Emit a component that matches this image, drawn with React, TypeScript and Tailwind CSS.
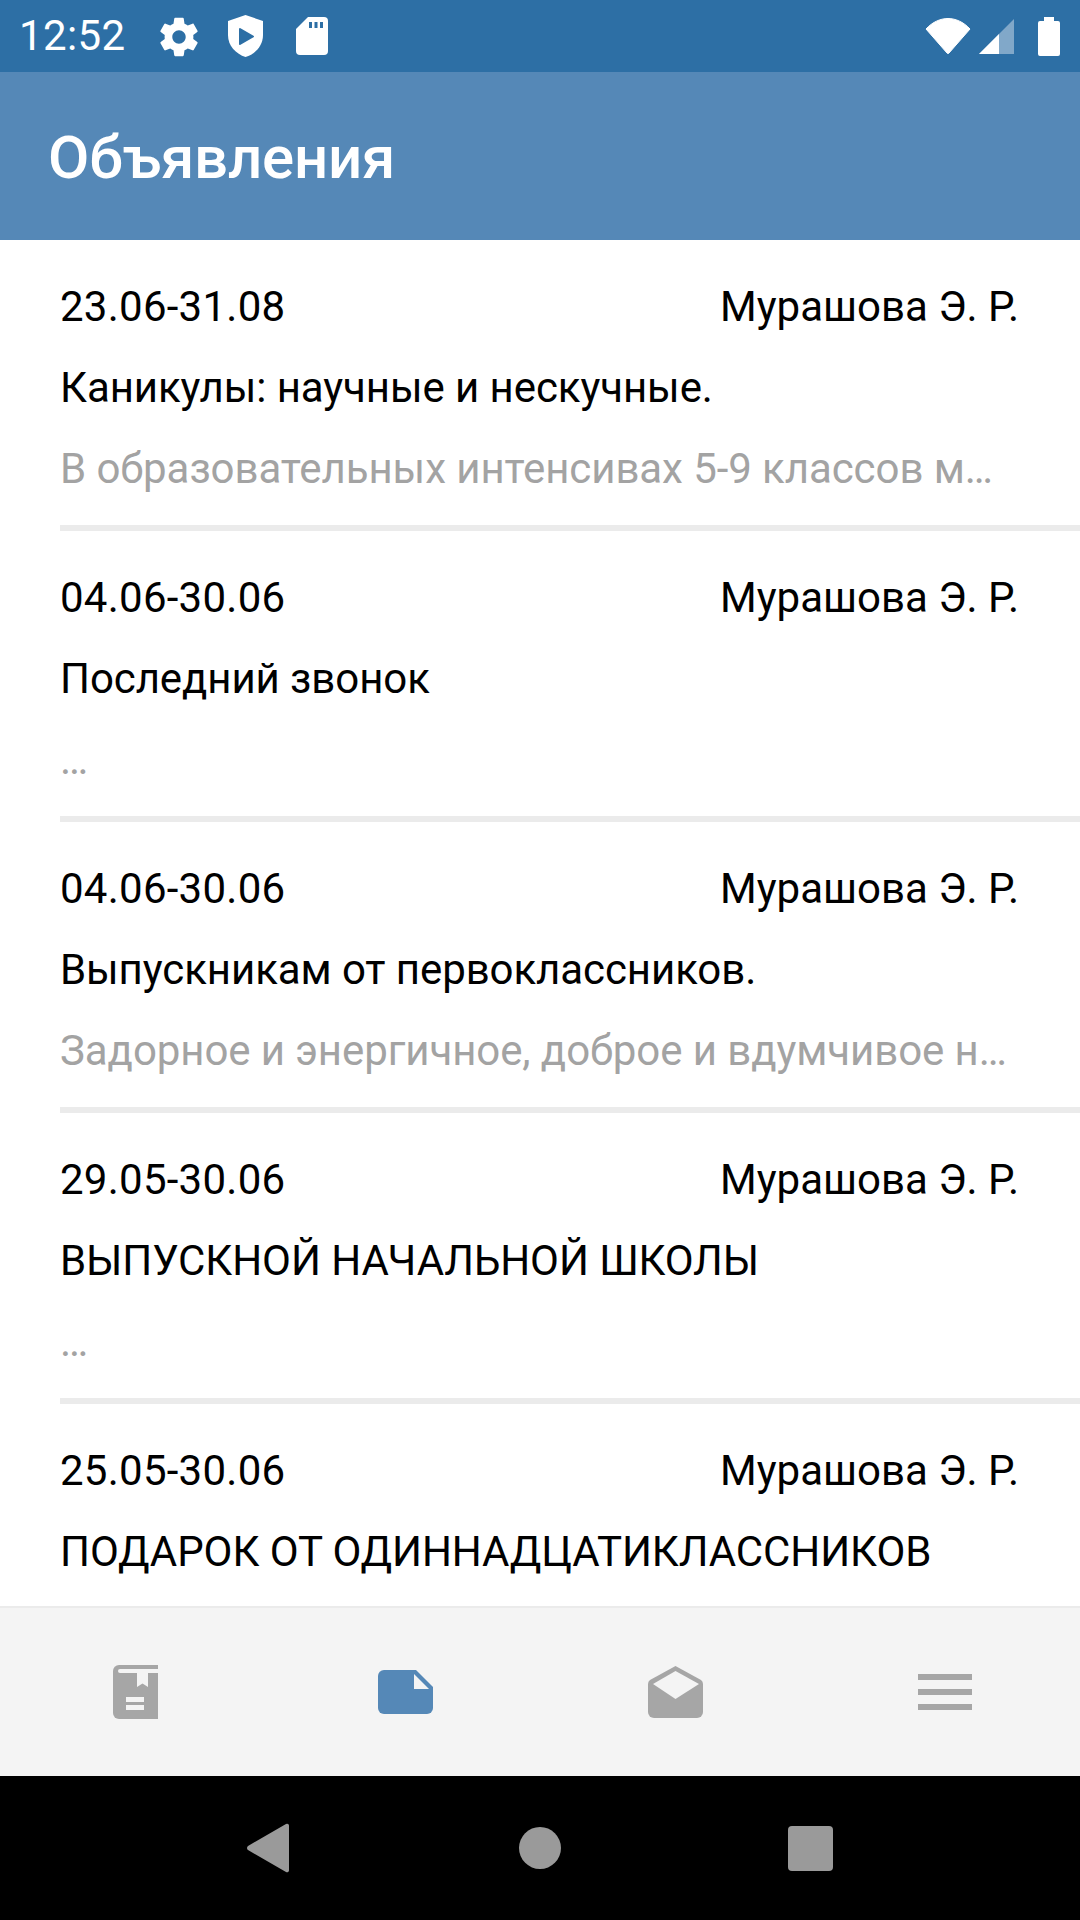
const notices = [
  { dates: "23.06-31.08", author: "Мурашова Э. Р.", title: "Каникулы: научные и нескучные.", text: "В образовательных интенсивах 5-9 классов м…" },
  { dates: "04.06-30.06", author: "Мурашова Э. Р.", title: "Последний звонок", text: "…" },
  { dates: "04.06-30.06", author: "Мурашова Э. Р.", title: "Выпускникам от первоклассников.", text: "Задорное и энергичное, доброе и вдумчивое н…" },
  { dates: "29.05-30.06", author: "Мурашова Э. Р.", title: "ВЫПУСКНОЙ НАЧАЛЬНОЙ ШКОЛЫ", text: "…" },
  { dates: "25.05-30.06", author: "Мурашова Э. Р.", title: "ПОДАРОК ОТ ОДИННАДЦАТИКЛАССНИКОВ", text: "" },
];

function StatusBar() {
  return (
    <div className="h-[72px] shrink-0 bg-[#2d6fa5] flex items-center pl-[19px] pr-5 text-white">
      <span className="text-[42px] leading-none tracking-[0.4px]">12:52</span>
      <svg className="ml-[30px] mt-[1px]" width="46" height="46" viewBox="0 0 24 24" fill="#fff">
        <path d="M19.43 12.98c.04-.32.07-.64.07-.98s-.03-.66-.07-.98l2.11-1.65c.19-.15.24-.42.12-.64l-2-3.46c-.12-.22-.39-.3-.61-.22l-2.49 1c-.52-.4-1.08-.73-1.69-.98l-.38-2.65C14.46 2.18 14.25 2 14 2h-4c-.25 0-.46.18-.49.42l-.38 2.65c-.61.25-1.17.59-1.69.98l-2.49-1c-.23-.09-.49 0-.61.22l-2 3.46c-.13.22-.07.49.12.64l2.11 1.65c-.04.32-.07.65-.07.98s.03.66.07.98l-2.11 1.65c-.19.15-.24.42-.12.64l2 3.46c.12.22.39.3.61.22l2.49-1c.52.4 1.08.73 1.69.98l.38 2.65c.03.24.24.42.49.42h4c.25 0 .46-.18.49-.42l.38-2.65c.61-.25 1.17-.59 1.69-.98l2.49 1c.23.09.49 0 .61-.22l2-3.46c.12-.22.07-.49-.12-.64l-2.11-1.65zM12 15.5c-1.93 0-3.5-1.57-3.5-3.5s1.57-3.5 3.5-3.5 3.5 1.57 3.5 3.5-1.57 3.5-3.5 3.5z" />
      </svg>
      <svg className="ml-[26px]" width="35" height="42" viewBox="0 0 35 42">
        <path d="M17.5 0 L35 6 V20 C35 31 27 39 17.5 42 C8 39 0 31 0 20 V6 Z" fill="#fff" />
        <path d="M12 14 L25 21.5 L12 29 Z" fill="#2d6fa5" stroke="#2d6fa5" strokeWidth="2" strokeLinejoin="round" />
      </svg>
      <svg className="ml-[33px]" width="32" height="38" viewBox="0 0 32 38">
        <path d="M12 0 H28 a4 4 0 0 1 4 4 V34 a4 4 0 0 1 -4 4 H4 a4 4 0 0 1 -4 -4 V12 Z" fill="#fff" />
        <rect x="13" y="5" width="3" height="6" fill="#2d6fa5" />
        <rect x="18.5" y="5" width="3" height="6" fill="#2d6fa5" />
        <rect x="24" y="5" width="3" height="6" fill="#2d6fa5" />
      </svg>
      <svg className="ml-auto" width="46" height="36" viewBox="0 0 46 36">
        <path d="M1 11 C14 -3 32 -3 45 11 L24 35 Q23 36 22 35 Z" fill="#fff" stroke="#fff" strokeWidth="1" strokeLinejoin="round" />
      </svg>
      <svg className="ml-2" width="35" height="35" viewBox="0 0 35 35">
        <path d="M35 0 V35 H0 Z" fill="#fff" fillOpacity="0.4" />
        <path d="M0 35 L20 15 V35 Z" fill="#fff" />
      </svg>
      <svg className="ml-6" width="22" height="39" viewBox="0 0 22 39">
        <path d="M6 0 H16 V4 H20 a2 2 0 0 1 2 2 V37 a2 2 0 0 1 -2 2 H2 a2 2 0 0 1 -2 -2 V6 a2 2 0 0 1 2 -2 H6 Z" fill="#fff" />
      </svg>
    </div>
  );
}

function NoticeRow({ dates, author, title, text }: (typeof notices)[number]) {
  return (
    <div>
      <div className="pt-[27px] pb-[16px] pl-[60px] pr-[61px] text-[42px] text-black">
        <div className="flex justify-between leading-[80px]">
          <span className="tracking-[0.25px]">{dates}</span>
          <span>{author}</span>
        </div>
        <div className="whitespace-nowrap leading-[82px] tracking-[-0.08px]">{title}</div>
        <div className="text-[#a3a3a3] whitespace-nowrap leading-[80px] tracking-[-0.08px]">{text}</div>
      </div>
      <div className="ml-[60px] h-[6px] bg-[#ebebeb]" />
    </div>
  );
}

function BottomNav() {
  return (
    <div className="h-[170px] shrink-0 bg-[#f4f4f4] border-t-[2px] border-[#ebebeb] grid grid-cols-4 items-center justify-items-center">
      <svg width="45" height="54" viewBox="0 0 45 54">
        <path d="M6 0 H45 V54 H6 a6 6 0 0 1 -6 -6 V6 a6 6 0 0 1 6 -6 Z" fill="#a6a6a6" />
        <path d="M7 4 H45 V8 H7 a2 2 0 0 1 0 -4 Z" fill="#f4f4f4" />
        <path d="M24 8 H35 V22 L29.5 18.5 L24 22 Z" fill="#f4f4f4" />
        <rect x="13" y="32" width="18" height="5" fill="#f4f4f4" />
        <rect x="13" y="40" width="18" height="5" fill="#f4f4f4" />
      </svg>
      <svg width="55" height="44" viewBox="0 0 55 44">
        <path d="M6 0 H38 L55 17 V38 a6 6 0 0 1 -6 6 H6 a6 6 0 0 1 -6 -6 V6 a6 6 0 0 1 6 -6 Z" fill="#5588b7" />
        <path d="M36 4 L51 19 H36 Z" fill="#f4f4f4" />
      </svg>
      <svg width="55" height="52" viewBox="0 0 55 52">
        <path d="M27.5 0 L53 14 Q55 15.5 55 18 V46 a6 6 0 0 1 -6 6 H6 a6 6 0 0 1 -6 -6 V18 Q0 15.5 2 14 Z" fill="#a6a6a6" />
        <path d="M27.5 5 L51 18 L27.5 33 L5 18 Z" fill="#f4f4f4" />
      </svg>
      <div className="w-[54px] flex flex-col gap-[9px]">
        <div className="h-[6px] bg-[#a6a6a6]" />
        <div className="h-[6px] bg-[#a6a6a6]" />
        <div className="h-[6px] bg-[#a6a6a6]" />
      </div>
    </div>
  );
}

function SystemNav() {
  return (
    <div className="h-[144px] shrink-0 bg-black px-[135px] grid grid-cols-3 items-center justify-items-center">
      <svg className="mr-[4px]" width="44" height="50" viewBox="0 0 44 50" fill="#9a9a9a">
        <path d="M40 1 a2 2 0 0 1 3 2 V47 a2 2 0 0 1 -3 2 L2 27 a2.5 2.5 0 0 1 0 -4 Z" />
      </svg>
      <div className="w-[42px] h-[42px] rounded-full bg-[#9a9a9a]" />
      <div className="w-[45px] h-[45px] rounded-[4px] bg-[#9a9a9a]" />
    </div>
  );
}

export default function App() {
  return (
    <div className="w-[1080px] h-[1920px] flex flex-col overflow-hidden bg-white font-['Roboto',sans-serif]">
      <StatusBar />
      <div className="h-[168px] shrink-0 bg-[#5588b7] flex items-center pl-[48px] pt-[3px]">
        <h1 className="text-[60px] font-medium text-white leading-none tracking-[-0.2px]">Объявления</h1>
      </div>
      <div className="flex-1 min-h-0 overflow-hidden">
        {notices.map((n, i) => (
          <NoticeRow key={i} {...n} />
        ))}
      </div>
      <BottomNav />
      <SystemNav />
    </div>
  );
}
